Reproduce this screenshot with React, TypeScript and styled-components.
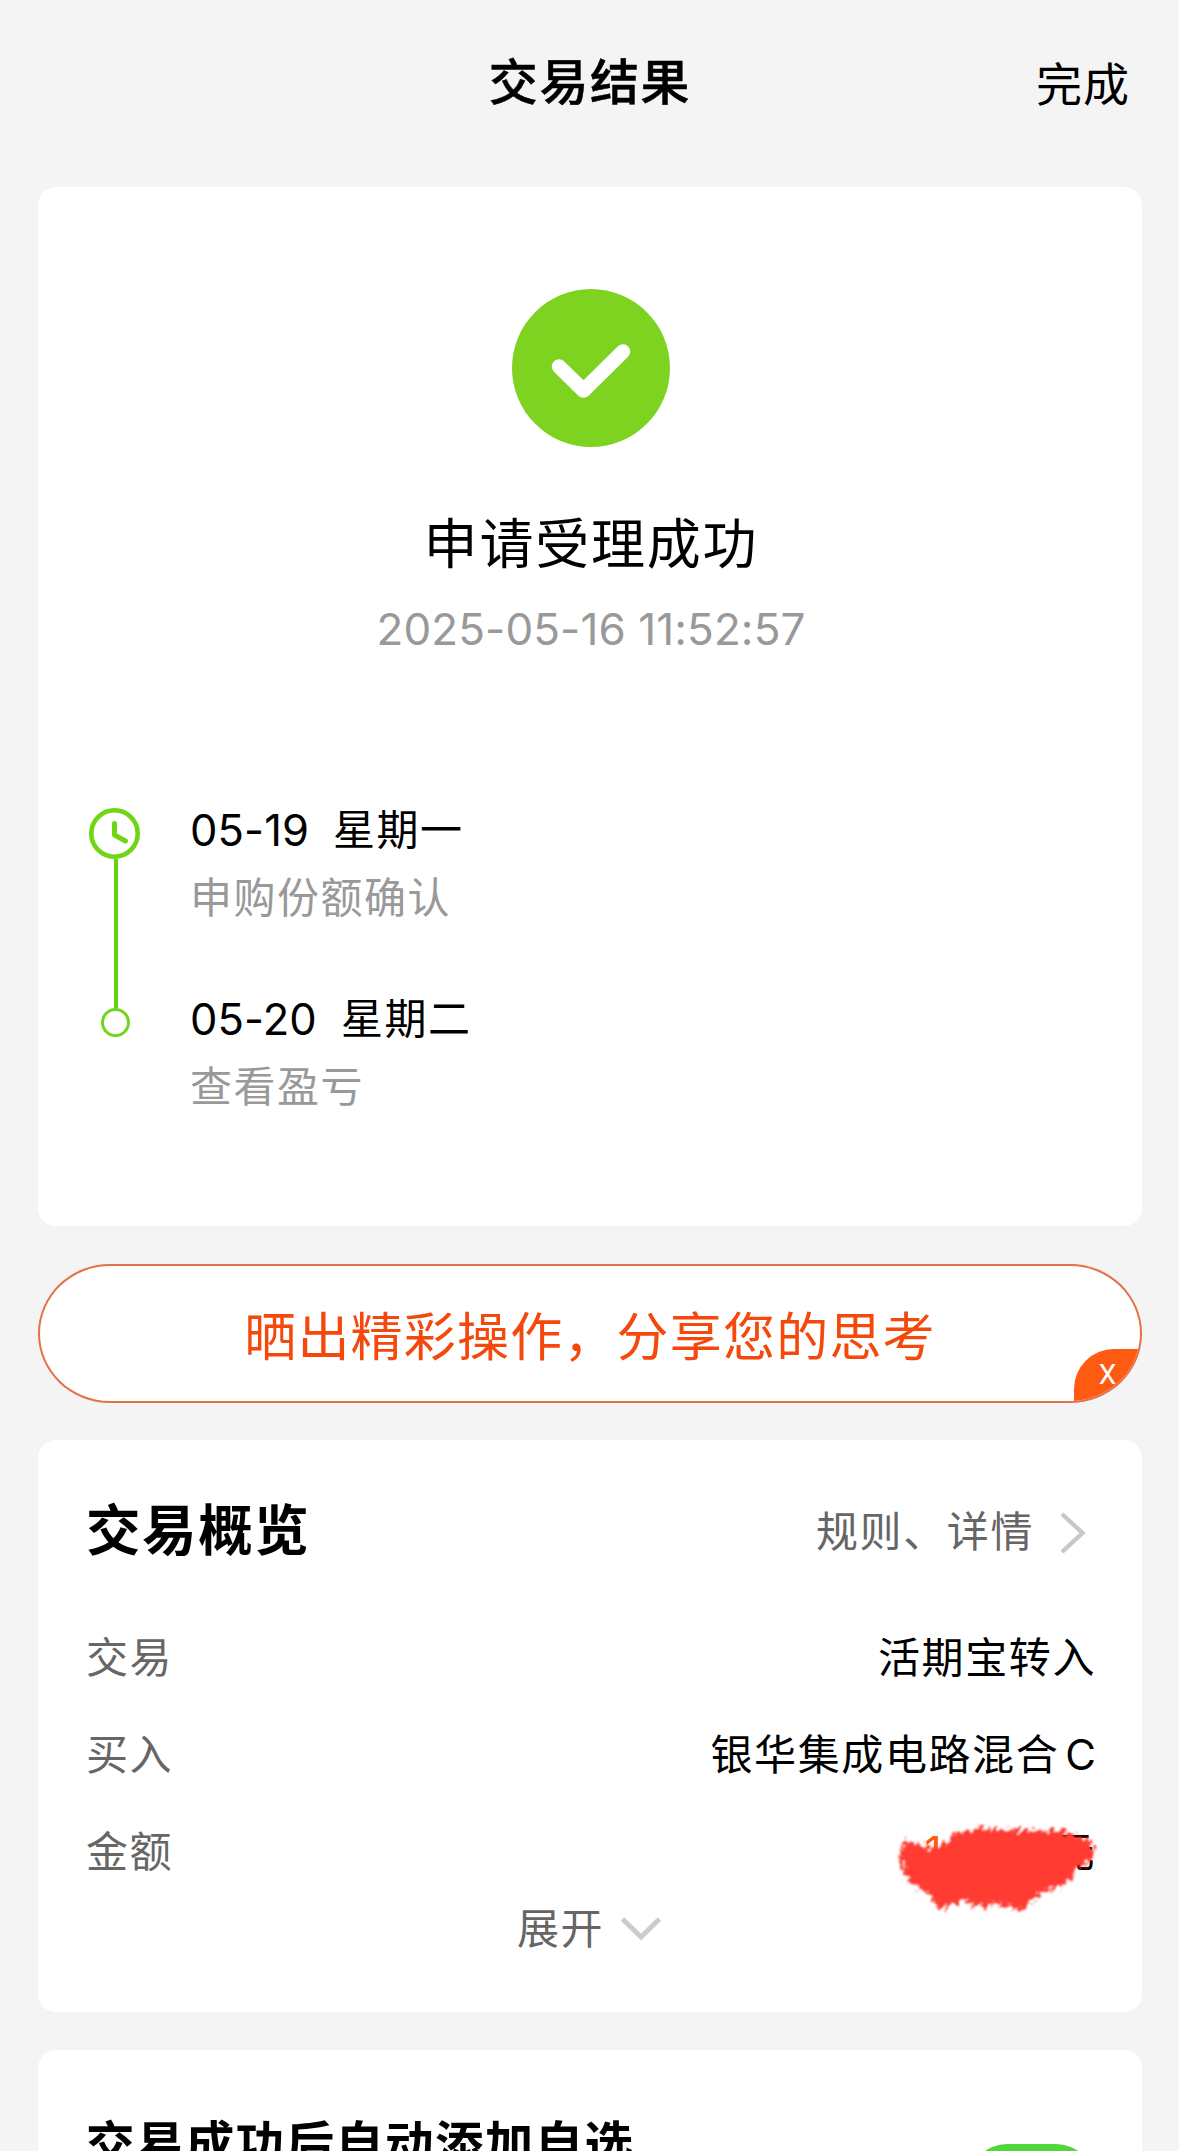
import React from 'react';
import styled, { createGlobalStyle } from 'styled-components';

const GlobalStyle = createGlobalStyle`
  * { box-sizing: border-box; }
  body {
    margin: 0;
    background: #f4f4f4;
    font-family: Inter, "Noto Sans CJK SC", sans-serif;
    color: #000;
  }
`;

const Page = styled.main`
  width: 1179px;
  height: 2151px;
  overflow: hidden;
  padding: 0 37px 0 38px;
  background: #f4f4f4;
`;

const Header = styled.header`
  display: grid;
  grid-template-columns: 1fr auto 1fr;
  align-items: center;
  height: 187px;
  padding-bottom: 21px;
`;

const HeaderTitle = styled.h1`
  grid-column: 2;
  margin: 0;
  font-size: 49px;
  line-height: 60px;
  font-weight: 500;
  letter-spacing: 1.6px;
  -webkit-text-stroke: 0.5px #000;
`;

const DoneButton = styled.button`
  justify-self: end;
  margin: 1px 12px 0 0;
  padding: 0;
  border: 0;
  background: none;
  color: #000;
  font: inherit;
  font-size: 46px;
  line-height: 60px;
  letter-spacing: 1px;
`;

const Card = styled.section<{ $height: number }>`
  height: ${(p) => p.$height}px;
  border-radius: 18px;
  background: #fff;
`;

const ResultHead = styled.div`
  display: flex;
  flex-direction: column;
  align-items: center;
  padding: 102px 0 0 2px;
`;

const ResultTitle = styled.h2`
  margin: 66px 0 0;
  font-size: 54px;
  line-height: 64px;
  font-weight: 400;
  letter-spacing: 1.8px;
`;

const ResultTime = styled.time`
  margin-top: 22px;
  font-size: 44px;
  line-height: 60px;
  color: #999;
  letter-spacing: 0.1px;
`;

const Timeline = styled.div`
  display: flex;
  margin-top: 138px;
  padding-left: 48px;
`;

const Rail = styled.div`
  display: flex;
  flex-direction: column;
  align-items: center;
  width: 57px;
  margin-top: 11px;
`;

const RailLine = styled.div`
  width: 4px;
  height: 149px;
  margin-left: 3px;
  background: #63d510;
`;

const RailDot = styled.div`
  width: 29px;
  height: 29px;
  margin-left: 1px;
  border: 3px solid #70d61c;
  border-radius: 50%;
`;

const Steps = styled.div`
  display: flex;
  flex-direction: column;
  gap: 56px;
  margin-left: 47px;
`;

const StepDate = styled.div`
  display: flex;
  gap: 24px;
  height: 64px;
  font-size: 43.5px;
  line-height: 66px;
`;

const DateText = styled.span`
  letter-spacing: 0.1px;
`;

const Weekday = styled.span`
  font-size: 42px;
  letter-spacing: 1.5px;
`;

const StepNote = styled.div`
  height: 64px;
  margin-top: 5px;
  font-size: 42px;
  line-height: 64px;
  letter-spacing: 1.5px;
  color: #999;
`;

const ShareBanner = styled.div`
  position: relative;
  display: flex;
  align-items: center;
  justify-content: center;
  height: 139px;
  margin: 38px 0 37px;
  padding-top: 0;
  overflow: hidden;
  border: 2px solid #e07348;
  border-radius: 72px / 69.5px;
  background: #fff;
  color: #f4480c;
  font-size: 52px;
  letter-spacing: 1.2px;
`;

const CloseTab = styled.button`
  position: absolute;
  right: 0;
  bottom: 0;
  width: 66px;
  height: 52px;
  padding: 0 0 0 1px;
  border: 0;
  border-radius: 40px 0 0 0;
  background: #ff5a12;
  color: #fff;
  font-family: Roboto, sans-serif;
  font-size: 28px;
  line-height: 50px;
  font-weight: 400;
  text-align: center;
`;

const OverviewBody = styled.div`
  display: flow-root;
`;

const OverviewHead = styled.div`
  display: flex;
  align-items: center;
  justify-content: space-between;
  height: 64px;
  margin: 58px 56px 66px 48px;
`;

const SectionTitle = styled.h3<{ $size: number; $spacing: number }>`
  margin: 0;
  font-size: ${(p) => p.$size}px;
  line-height: 66px;
  font-weight: 700;
  letter-spacing: ${(p) => p.$spacing}px;
`;

const RulesLink = styled.a`
  display: flex;
  align-items: center;
  gap: 26px;
  height: 60px;
  padding-bottom: 3px;
  font-size: 42px;
  letter-spacing: 1.6px;
  color: #666;

  svg {
    margin-top: 8px;
  }
`;

const InfoRow = styled.div`
  display: flex;
  align-items: center;
  justify-content: space-between;
  height: 60px;
  margin: 0 46px 37px 48px;
  font-size: 42px;
  line-height: 60px;
  letter-spacing: 1.6px;
`;

const Label = styled.span`
  color: #666;
`;

const Value = styled.span`
  position: relative;
  display: flex;
`;

const ShareClass = styled.span`
  margin-left: 6px;
  letter-spacing: 0;
`;

const AmountDigit = styled.span`
  width: 128px;
  color: #ff5a12;
`;

const Scribble = styled.svg`
  position: absolute;
  top: -2px;
  right: -4px;
  overflow: visible;
`;

const Expand = styled.button`
  display: flex;
  align-items: center;
  justify-content: center;
  gap: 17px;
  width: 100%;
  height: 60px;
  margin-top: -24px;
  padding: 0 2px 0 0;
  border: 0;
  background: none;
  color: #666;
  font: inherit;
  font-size: 42px;
  letter-spacing: 1.4px;

  svg {
    margin-top: 8px;
  }
`;

const LastCard = styled(Card)`
  display: flex;
  align-items: flex-start;
  justify-content: space-between;
  margin-top: 38px;
  padding: 62px 48px 0;
`;

const Switch = styled.div`
  display: flex;
  justify-content: flex-end;
  width: 125px;
  height: 76px;
  margin-top: 32px;
  padding: 7px;
  border-radius: 38px;
  background: #53d53c;
`;

const Knob = styled.div`
  width: 62px;
  height: 62px;
  border-radius: 50%;
  background: #fff;
`;

const CheckIcon = () => (
  <svg width="158" height="158" viewBox="0 0 158 158">
    <circle cx="79" cy="79" r="79" fill="#7ed321" />
    <path d="M47 77.5 71.5 101.5 111 62.5" fill="none" stroke="#fff" strokeWidth="14.5" strokeLinecap="round" strokeLinejoin="round" />
  </svg>
);

const ClockIcon = () => (
  <svg width="51" height="51" viewBox="0 0 51 51">
    <circle cx="25.5" cy="25.5" r="23.2" fill="none" stroke="#70d613" strokeWidth="4.6" />
    <path d="M25.5 15.5V27L36.5 33" fill="none" stroke="#70d613" strokeWidth="5" strokeLinecap="round" strokeLinejoin="round" />
  </svg>
);

const RedScribble = () => (
  <Scribble width="207" height="97" viewBox="100 120 620 290">
    <defs>
      <filter id="rough" x="-10%" y="-15%" width="120%" height="130%">
        <feTurbulence type="fractalNoise" baseFrequency="0.07" numOctaves="3" seed="7" />
        <feDisplacementMap in="SourceGraphic" scale="56" xChannelSelector="R" yChannelSelector="G" />
        <feGaussianBlur stdDeviation="2.6" />
      </filter>
    </defs>
    <path
      filter="url(#rough)"
      fill="#ff3b30"
      d="M125 190 160 184 195 200 220 204 255 196 290 152 380 145 450 148 540 152 600 149 635 162 690 182 703 212 692 242 650 260 637 292 600 318 530 345 510 372 480 390 440 374 400 367 380 379 340 376 320 356 290 370 240 386 210 350 180 322 140 294 125 250Z"
    />
  </Scribble>
);

const steps = [
  { date: '05-19', day: '星期一', note: '申购份额确认' },
  { date: '05-20', day: '星期二', note: '查看盈亏' },
];

export default function App() {
  return (
    <>
      <GlobalStyle />
      <Page>
        <Header>
          <HeaderTitle>交易结果</HeaderTitle>
          <DoneButton>完成</DoneButton>
        </Header>

        <Card $height={1039}>
          <ResultHead>
            <CheckIcon />
            <ResultTitle>申请受理成功</ResultTitle>
            <ResultTime>2025-05-16 11:52:57</ResultTime>
          </ResultHead>
          <Timeline>
            <Rail>
              <ClockIcon />
              <RailLine />
              <RailDot />
            </Rail>
            <Steps>
              {steps.map((s) => (
                <div key={s.date}>
                  <StepDate>
                    <DateText>{s.date}</DateText>
                    <Weekday>{s.day}</Weekday>
                  </StepDate>
                  <StepNote>{s.note}</StepNote>
                </div>
              ))}
            </Steps>
          </Timeline>
        </Card>

        <ShareBanner>
          晒出精彩操作，分享您的思考
          <CloseTab>X</CloseTab>
        </ShareBanner>

        <Card $height={572}>
          <OverviewBody>
            <OverviewHead>
              <SectionTitle $size={54.5} $spacing={1.6}>交易概览</SectionTitle>
              <RulesLink>
                规则、详情
                <svg width="26" height="42" viewBox="0 0 26 42">
                  <path d="M2 2 22.5 21 2 40" fill="none" stroke="#c8c8c8" strokeWidth="4.4" />
                </svg>
              </RulesLink>
            </OverviewHead>
            <InfoRow>
              <Label>交易</Label>
              <Value>活期宝转入</Value>
            </InfoRow>
            <InfoRow>
              <Label>买入</Label>
              <Value>
                银华集成电路混合<ShareClass>C</ShareClass>
              </Value>
            </InfoRow>
            <InfoRow>
              <Label>金额</Label>
              <Value>
                <AmountDigit>1</AmountDigit>元
                <RedScribble />
              </Value>
            </InfoRow>
            <Expand>
              展开
              <svg width="40" height="24" viewBox="0 0 40 24">
                <path d="M1.5 2 20 20 38.5 2" fill="none" stroke="#ccc" strokeWidth="5" />
              </svg>
            </Expand>
          </OverviewBody>
        </Card>

        <LastCard $height={200}>
          <SectionTitle $size={48.5} $spacing={1.35}>交易成功后自动添加自选</SectionTitle>
          <Switch>
            <Knob />
          </Switch>
        </LastCard>
      </Page>
    </>
  );
}
